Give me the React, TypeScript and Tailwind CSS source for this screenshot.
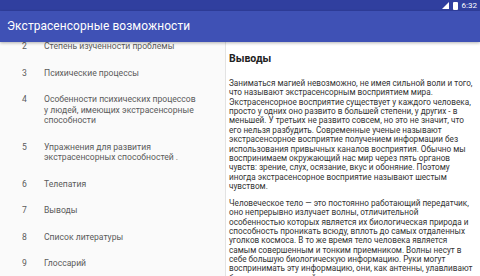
const chapters = [
  { n: 2, lines: ['Степень изученности проблемы'] },
  { n: 3, lines: ['Психические процессы'] },
  { n: 4, lines: ['Особенности психических процессов', 'у людей, имеющих экстрасенсорные', 'способности'] },
  { n: 5, lines: ['Упражнения для развития', 'экстрасенсорных способностей .'] },
  { n: 6, lines: ['Телепатия'] },
  { n: 7, lines: ['Выводы'] },
  { n: 8, lines: ['Список литературы'] },
  { n: 9, lines: ['Глоссарий'] },
]

const paragraphs = [
  [
    'Заниматься магией невозможно, не имея сильной воли и того,',
    'что называют экстрасенсорным восприятием мира.',
    'Экстрасенсорное восприятие существует у каждого человека,',
    'просто у одних оно развито в большей степени, у других - в',
    'меньшей.  У третьих не развито совсем, но это не значит, что',
    'его нельзя разбудить. Современные ученые называют',
    'экстрасенсорное восприятие получением информации без',
    'использования привычных каналов восприятия. Обычно мы',
    'воспринимаем окружающий нас мир через пять органов',
    'чувств: зрение, слух, осязание, вкус и обоняние. Поэтому',
    'иногда экстрасенсорное восприятие называют шестым',
    'чувством.',
  ],
  [
    'Человеческое тело — это постоянно работающий передатчик,',
    'оно непрерывно излучает волны, отличительной',
    'особенностью которых является их биологическая природа и',
    'способность проникать всюду, вплоть до самых отдаленных',
    'уголков космоса. В то же время тело человека является',
    'самым совершенным и тонким приемником. Волны несут в',
    'себе большую биологическую информацию. Руки могут',
    'воспринимать эту информацию, они, как антенны, улавливают',
    'биополе других людей и предметов, определяя их состояние.',
  ],
]

export default function App() {
  return (
    <div className="w-[480px] h-[276px] overflow-hidden flex flex-col bg-white font-['Roboto',sans-serif]">
      {/* status bar */}
      <div className="h-[11px] bg-[#303f9f] flex items-center justify-end gap-[4px] pr-[3px] text-white">
        <svg width="7" height="7" viewBox="0 0 10 10">
          <path d="M10 0 L10 10 L0 10 Z" fill="white" />
        </svg>
        <div className="w-[5px] h-[8px] bg-white rounded-[1px]" />
        <span className="text-[8px] leading-none">6:32</span>
      </div>

      {/* app bar */}
      <div className="h-[31px] bg-[#3f51b5] flex items-center pl-[7px] shadow-[0_1px_3px_rgba(0,0,0,0.3)] relative z-10">
        <span className="text-white text-[11.9px] tracking-[0.1px]">Экстрасенсорные возможности</span>
      </div>

      <div className="flex flex-1 overflow-hidden">
        {/* chapter list */}
        <div className="w-[226px] shrink-0 bg-[#fafafa] border-r border-[#e3e3e3] overflow-hidden">
          <ul className="-mt-[9px]">
            {chapters.map((c) => (
              <li key={c.n} className="flex py-2 text-[8.6px] leading-[10.5px] text-[#5a5a5a]">
                <span className="w-[44px] shrink-0 pl-[22px]">{c.n}</span>
                <span>
                  {c.lines.map((l) => (
                    <span key={l} className="block whitespace-nowrap">{l}</span>
                  ))}
                </span>
              </li>
            ))}
          </ul>
        </div>

        {/* content */}
        <div className="flex-1 pl-[3px] pr-[4px] pt-[11px] text-[#333] overflow-hidden">
          <h2 className="text-[10.5px] font-bold text-[#222] leading-[12px] mb-[14px]">Выводы</h2>
          {paragraphs.map((p, i) => (
            <p key={i} className="text-[8.2px] leading-[9.36px] mb-[7.5px]">
              {p.map((l) => (
                <span key={l} className="block whitespace-nowrap">{l}</span>
              ))}
            </p>
          ))}
        </div>
      </div>
    </div>
  )
}
